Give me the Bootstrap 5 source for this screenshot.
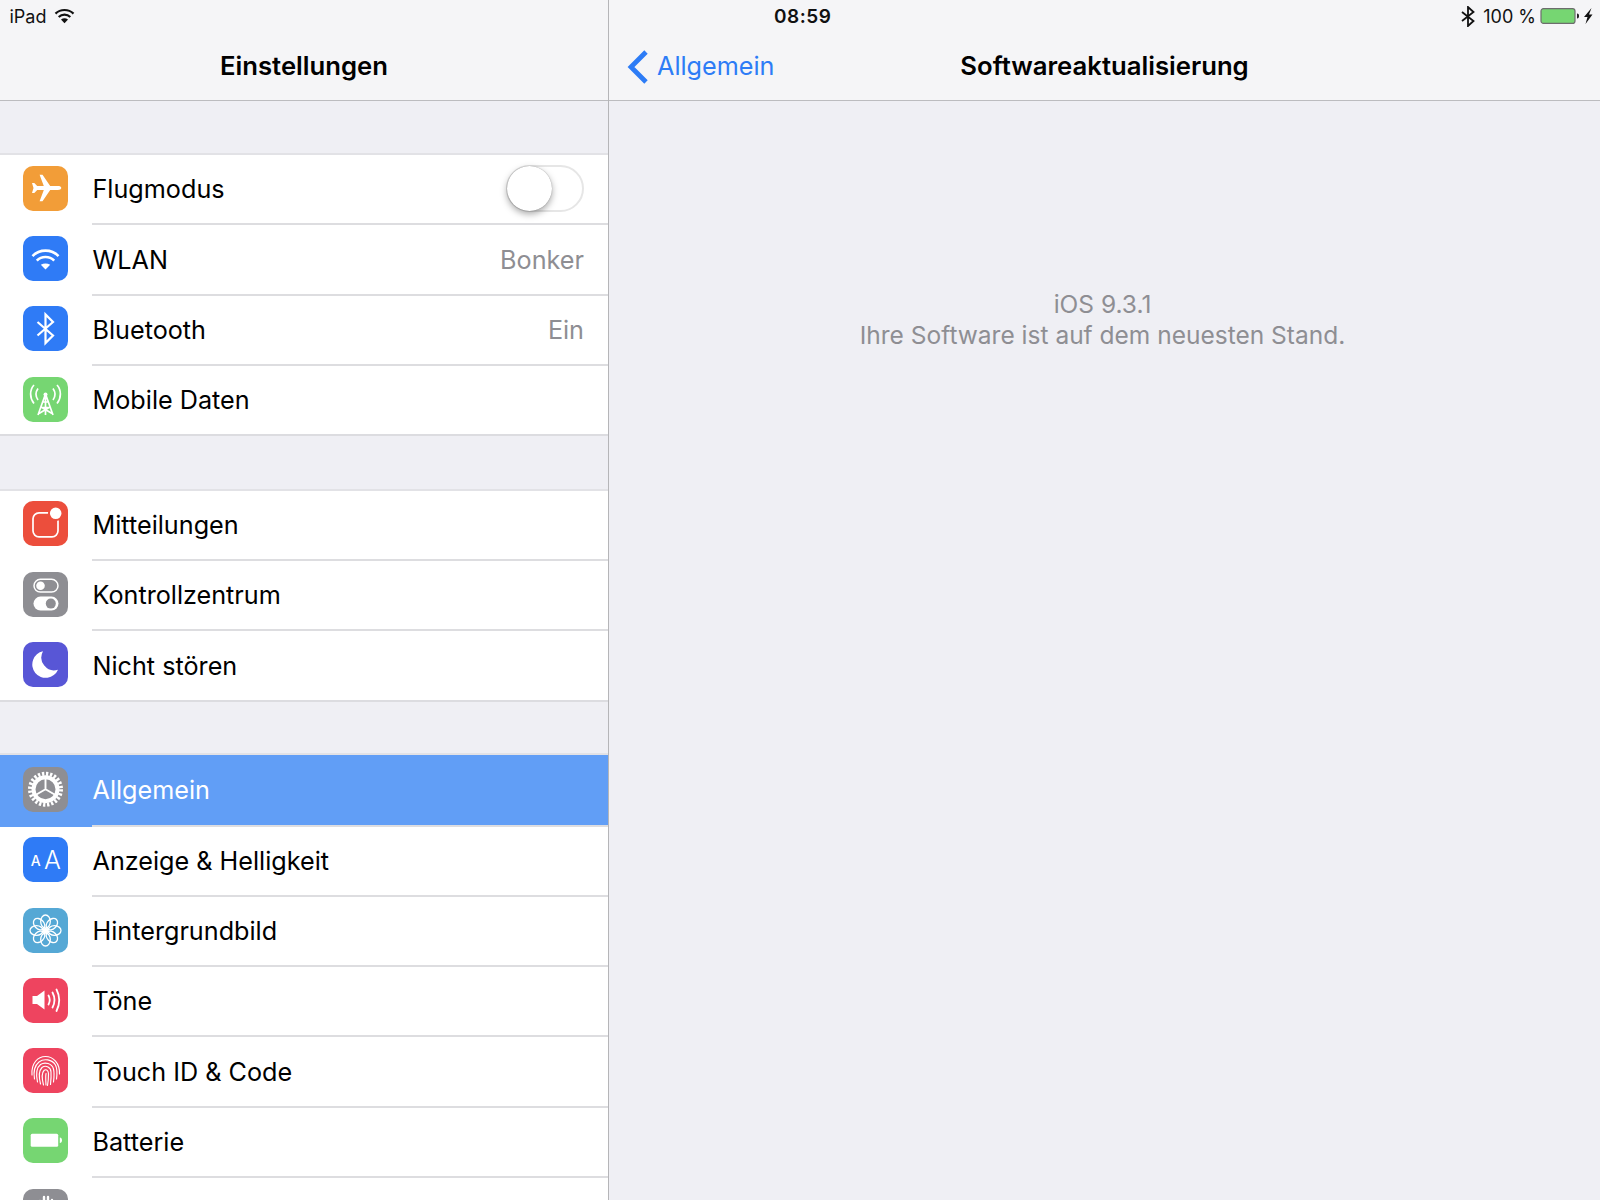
<!DOCTYPE html>
<html lang="de">
<head>
  <meta charset="UTF-8" />
  <meta name="viewport" content="width=device-width, initial-scale=1.0" />
  <title>Einstellungen</title>
  <link href="https://cdn.jsdelivr.net/npm/bootstrap@5.3.0/dist/css/bootstrap.min.css" rel="stylesheet" />
  <style>
    html, body { height: 1200px; overflow: hidden; }
    body { background: #efeff4; font-family: Inter, Roboto, "Liberation Sans", sans-serif; color: #000; position: relative; }
    .ipad-status { position: absolute; top: 0; left: 0; right: 0; height: 32px; font-size: 18px; color: #111; padding: 0 7px 0 9.500px; z-index: 2; }
    .ipad-status > div { flex: 1 1 0; }
    .clock { font-weight: 600; font-size: 19px; letter-spacing: .5px; padding: 2px 0 0 3px; }
    .master { width: 609px; height: 1200px; border-right: 1.500px solid #b5b5b8; }
    .nav-head { height: 101px; background: #f5f5f7; border-bottom: 1.500px solid #bcbcbf; padding-top: 33px; font-size: 25.700px; font-weight: 600; flex-shrink: 0; }
    .nav-title { height: 67px; }
    .sec-gap { height: 52px; flex-shrink: 0; }
    .sec-gap.gap-wide { height: 52.500px; }
    .sec-gap.gap-narrow { height: 51.500px; }
    .set-list { border-top: 2px solid #e2e2e6; background: #fff; border-radius: 0; }
    .set-list .list-group-item { height: 70.300px; padding: 0; border: 0; background: transparent; font-size: 25.200px; color: #000; }
    .set-list .list-group-item.active { background: #619ef6; color: #fff; margin: 0; height: 71.500px; }
    .list-group-item:last-child { border-bottom: 2px solid #dcdce0 !important; }
    .set-ic { width: 45px; height: 45px; margin: 10.700px 24px 0 23px; flex-shrink: 0; display: block; }
    .active .set-ic { margin-top: 12.300px; }
    .set-body { height: 100%; border-bottom: 2px solid #dddde0; padding: 2px 24px 0 .5px; min-width: 0; }
    .list-group-item:last-child .set-body { border-bottom: 0; }
    .set-val { color: #8e8e93; }
    .fake-switch { width: 78px; height: 47px; border: 2px solid #e6e6e6; border-radius: 24px; position: relative; margin-top: -3px; }
    .fake-knob { position: absolute; left: -1px; top: -1px; width: 45px; height: 45px; border-radius: 50%; background: #fff; box-shadow: 0 3px 7px rgba(0,0,0,.35), 0 0 1px rgba(0,0,0,.4); }
    .back-link { color: #2d7cf6; text-decoration: none; left: 17px; top: 0; font-size: 25.200px; }
    .back-link svg { width: 24px; height: 36px; margin-right: 7px; }
    .status-msg { padding: 187.500px 4px 0 0; font-size: 24.500px; line-height: 31.500px; color: #8e8e93; }
  </style>
</head>
<body>
  <div class="ipad-status d-flex align-items-center">
    <div class="d-flex align-items-center">
      <span>iPad</span>
      <svg class="ms-2" width="21" height="16" viewBox="0 0 20 16" fill="none" stroke="#111" stroke-width="2.200">
        <path d="M1 5.600A13 13 0 0 1 19 5.600"/><path d="M4.200 9A8.500 8.500 0 0 1 15.800 9"/><path d="M6.500 11.400Q10 9 13.500 11.400L10 15.200Z" fill="#111" stroke="none"/>
      </svg>
    </div>
    <div class="text-center clock">08:59</div>
    <div class="d-flex align-items-center justify-content-end">
      <svg width="14" height="21" viewBox="0 0 14 21" fill="none" stroke="#111" stroke-width="1.800"><path d="M1 6L12.500 15L7 20V1L12.500 6L1 15"/></svg>
      <span class="ms-2">100 %</span>
      <svg class="ms-1" width="53" height="18" viewBox="0 0 53 18">
        <rect x="1" y="1.600" width="34" height="14.800" rx="2.500" fill="#76d672" stroke="#6d6d6d" stroke-width="1.200"/>
        <path d="M37 6.500c1.600 0 2 1 2 2.500s-.4 2.500-2 2.500z" fill="#222"/>
        <path d="M51.500 1L44 10h3.500l-2 7 7-9.500h-3.500z" fill="#111"/>
      </svg>
    </div>
  </div>

  <div class="d-flex">
    <aside class="master d-flex flex-column flex-shrink-0 overflow-hidden">
      <div class="nav-head">
        <div class="nav-title d-flex align-items-center justify-content-center">Einstellungen</div>
      </div>
      <div class="sec-gap"></div>
      <div class="list-group list-group-flush set-list">
        <div class="list-group-item d-flex">
          <svg class="set-ic" viewBox="0 0 45 45"><rect width="45" height="45" rx="10" fill="#f29d38"/><path d="M38.300 22c0-1.300-1.700-1.900-3.300-1.900H27.200L19.500 8.700H16.600L20.800 20.100H14.200L11.300 17H9L10.500 22L9 27H11.300L14.200 23.900H20.800L16.600 35.300H19.500L27.200 23.900H35c1.600 0 3.300-.6 3.300-1.900z" fill="#fff"/></svg>
          <div class="set-body flex-grow-1 d-flex align-items-center justify-content-between"><span>Flugmodus</span><div class="fake-switch"><div class="fake-knob"></div></div></div>
        </div>
        <div class="list-group-item d-flex">
          <svg class="set-ic" viewBox="0 0 45 45" fill="none" stroke="#fff" stroke-width="2.600"><rect width="45" height="45" rx="10" fill="#2f7bf6" stroke="none"/><path d="M9.500 20.200A18 18 0 0 1 35.500 20.200"/><path d="M13.800 24.600A12.200 12.200 0 0 1 31.200 24.600"/><path d="M17.800 28.800Q22.500 26 27.200 28.800L22.500 33.500Z" fill="#fff" stroke="none"/></svg>
          <div class="set-body flex-grow-1 d-flex align-items-center justify-content-between"><span>WLAN</span><span class="set-val">Bonker</span></div>
        </div>
        <div class="list-group-item d-flex">
          <svg class="set-ic" viewBox="0 0 45 45" fill="none" stroke="#fff" stroke-width="2.200"><rect width="45" height="45" rx="10" fill="#2f7bf6" stroke="none"/><path d="M14.500 16L30 29.500L22.500 37V8.500L30 16L14.500 29.500"/></svg>
          <div class="set-body flex-grow-1 d-flex align-items-center justify-content-between"><span>Bluetooth</span><span class="set-val">Ein</span></div>
        </div>
        <div class="list-group-item d-flex">
          <svg class="set-ic" viewBox="0 0 45 45" fill="none" stroke="#fff" stroke-width="1.700"><rect width="45" height="45" rx="10" fill="#76d672" stroke="none"/><path d="M11 8C6.500 13 6.500 21 11 26.500M34 8C38.500 13 38.500 21 34 26.500M15 11.500C12.500 15 12.500 19.500 15 23M30 11.500C32.500 15 32.500 19.500 30 23"/><circle cx="22.500" cy="17.500" r="2" fill="#fff" stroke="none"/><path d="M22.500 17L15 38M22.500 17L30 38M20 25H25M18 30.500H27M16 36.500L26 30.500M29 36.500L19 30.500M22.500 17V38"/></svg>
          <div class="set-body flex-grow-1 d-flex align-items-center"><span>Mobile Daten</span></div>
        </div>
      </div>
      <div class="sec-gap gap-wide"></div>
      <div class="list-group list-group-flush set-list">
        <div class="list-group-item d-flex">
          <svg class="set-ic" viewBox="0 0 45 45" fill="none" stroke="#fff" stroke-width="1.700"><rect width="45" height="45" rx="10" fill="#ec4e3c" stroke="none"/><rect x="10" y="11.800" width="25" height="24" rx="6"/><circle cx="32.700" cy="12.300" r="6.800" fill="#fff" stroke="#ec4e3c" stroke-width="2"/></svg>
          <div class="set-body flex-grow-1 d-flex align-items-center"><span>Mitteilungen</span></div>
        </div>
        <div class="list-group-item d-flex">
          <svg class="set-ic" viewBox="0 0 45 45"><rect width="45" height="45" rx="10" fill="#8e8e93"/><rect x="11" y="7.300" width="24" height="12.800" rx="6.400" fill="none" stroke="#fff" stroke-width="1.500"/><circle cx="17.500" cy="13.700" r="4.300" fill="#fff"/><rect x="10.500" y="24.600" width="25" height="14" rx="7" fill="#fff"/><circle cx="27.800" cy="31.600" r="5" fill="#8e8e93"/></svg>
          <div class="set-body flex-grow-1 d-flex align-items-center"><span>Kontrollzentrum</span></div>
        </div>
        <div class="list-group-item d-flex">
          <svg class="set-ic" viewBox="0 0 45 45"><rect width="45" height="45" rx="10" fill="#5856d6"/><path d="M20 9.300A13.400 13.400 0 1 0 35 27.700A12.800 12.800 0 0 1 20 9.300z" fill="#fff"/></svg>
          <div class="set-body flex-grow-1 d-flex align-items-center"><span>Nicht stören</span></div>
        </div>
      </div>
      <div class="sec-gap gap-narrow"></div>
      <div class="list-group list-group-flush set-list">
        <div class="list-group-item active d-flex">
          <svg class="set-ic" viewBox="0 0 45 45" fill="none" stroke="#fff"><rect width="45" height="45" rx="10" fill="#8e8e93" stroke="none"/><circle cx="22.500" cy="22.200" r="15.500" stroke-width="4" stroke-dasharray="2.300 1.760"/><circle cx="22.500" cy="22.200" r="12" stroke-width="4"/><path d="M22.500 11V22.200L13 27.700M22.500 22.200L32 27.700" stroke-width="1.900"/></svg>
          <div class="set-body flex-grow-1 d-flex align-items-center"><span>Allgemein</span></div>
        </div>
        <div class="list-group-item d-flex">
          <svg class="set-ic" viewBox="0 0 45 45"><rect width="45" height="45" rx="10" fill="#2f7bf6"/><text x="7.800" y="29.300" font-size="14" fill="#fff" font-family="Inter, sans-serif" font-weight="500">A</text><text x="21" y="31.700" font-size="25" fill="#fff" font-family="Inter, sans-serif" font-weight="300">A</text></svg>
          <div class="set-body flex-grow-1 d-flex align-items-center"><span>Anzeige &amp; Helligkeit</span></div>
        </div>
        <div class="list-group-item d-flex">
          <svg class="set-ic" viewBox="0 0 45 45" fill="none" stroke="#fff" stroke-width="1.300"><rect width="45" height="45" rx="10" fill="#55a8d5" stroke="none"/><ellipse cx="22.500" cy="13.500" rx="4.800" ry="6.500"/><ellipse cx="22.500" cy="13.500" rx="4.800" ry="6.500" transform="rotate(45 22.500 22.500)"/><ellipse cx="22.500" cy="13.500" rx="4.800" ry="6.500" transform="rotate(90 22.500 22.500)"/><ellipse cx="22.500" cy="13.500" rx="4.800" ry="6.500" transform="rotate(135 22.500 22.500)"/><ellipse cx="22.500" cy="13.500" rx="4.800" ry="6.500" transform="rotate(180 22.500 22.500)"/><ellipse cx="22.500" cy="13.500" rx="4.800" ry="6.500" transform="rotate(225 22.500 22.500)"/><ellipse cx="22.500" cy="13.500" rx="4.800" ry="6.500" transform="rotate(270 22.500 22.500)"/><ellipse cx="22.500" cy="13.500" rx="4.800" ry="6.500" transform="rotate(315 22.500 22.500)"/><circle cx="22.500" cy="22.500" r="2.600" fill="#fff" stroke="none"/></svg>
          <div class="set-body flex-grow-1 d-flex align-items-center"><span>Hintergrundbild</span></div>
        </div>
        <div class="list-group-item d-flex">
          <svg class="set-ic" viewBox="0 0 45 45" fill="none" stroke="#fff" stroke-width="1.800" stroke-linecap="round"><rect width="45" height="45" rx="10" fill="#ee445f" stroke="none"/><path d="M9.500 18H14L21.500 12.500V31.500L14 26H9.500Z" fill="#fff" stroke="none"/><path d="M25.500 17.500Q28 22 25.500 26.500M29.500 14.500Q33.500 22 29.500 29.500M33.500 11.500Q39 22 33.500 33"/></svg>
          <div class="set-body flex-grow-1 d-flex align-items-center"><span>Töne</span></div>
        </div>
        <div class="list-group-item d-flex">
          <svg class="set-ic" viewBox="0 0 45 45" fill="none" stroke="#fff" stroke-width="1.150" stroke-linecap="round"><rect width="45" height="45" rx="10" fill="#ee445f" stroke="none"/><path d="M9 27C8 15 15 8.500 22.500 8.500S37 15 36.500 26"/><path d="M11.500 31C10.500 25 11 18 16 14C21 10 29 11.500 32.500 17C34.500 21 34 27 33.500 31"/><path d="M14.500 34C13 27 13 20 17.500 16.500C22 13.500 29 15.500 30.500 21C31.500 25 31 30 30.500 34"/><path d="M17.500 36C16 30 15.500 23 19 19.500C23 16.500 28 19.500 28 24C28.300 28 28 32 27.500 36.500"/><path d="M20.500 37C19 31 18.500 25 21 22.500C23.500 20.500 25.500 23 25.500 26C25.500 30 25.200 34 24.500 37.500"/><path d="M23 25.500C22.500 29 22.800 34 23 37"/></svg>
          <div class="set-body flex-grow-1 d-flex align-items-center"><span>Touch ID &amp; Code</span></div>
        </div>
        <div class="list-group-item d-flex">
          <svg class="set-ic" viewBox="0 0 45 45"><rect width="45" height="45" rx="10" fill="#76d672"/><rect x="7.700" y="15.700" width="27.500" height="13" rx="1.500" fill="#fff"/><path d="M36.800 19.500c1.500 0 2.200 1.200 2.200 2.700s-.7 2.700-2.200 2.700z" fill="#fff"/></svg>
          <div class="set-body flex-grow-1 d-flex align-items-center"><span>Batterie</span></div>
        </div>
        <div class="list-group-item d-flex">
          <svg class="set-ic" viewBox="0 0 45 45" fill="none" stroke="#fff" stroke-width="2.400" stroke-linecap="round"><rect width="45" height="45" rx="10" fill="#8e8e93" stroke="none"/><path d="M17 12V24M21 8V24M25 8V24M29 11V24"/><path d="M16 22H30V30C30 35 27 38 23 38C19 38 15 35 12 29L16 27Z" fill="#fff" stroke="none"/></svg>
          <div class="set-body flex-grow-1"></div>
        </div>
      </div>
    </aside>

    <main class="flex-grow-1">
      <div class="nav-head">
        <div class="nav-title d-flex align-items-center justify-content-center position-relative">
          <a class="back-link position-absolute h-100 d-flex align-items-center fw-normal" href="#">
            <svg viewBox="0 0 24 36" fill="none" stroke="#2d7cf6" stroke-width="4.800"><path d="M20 3L5 18L20 33"/></svg>Allgemein
          </a>
          <span>Softwareaktualisierung</span>
        </div>
      </div>
      <div class="status-msg text-center">iOS 9.3.1<br />Ihre Software ist auf dem neuesten Stand.</div>
    </main>
  </div>
  <script src="https://cdn.jsdelivr.net/npm/bootstrap@5.3.0/dist/js/bootstrap.bundle.min.js"></script>
</body>
</html>
